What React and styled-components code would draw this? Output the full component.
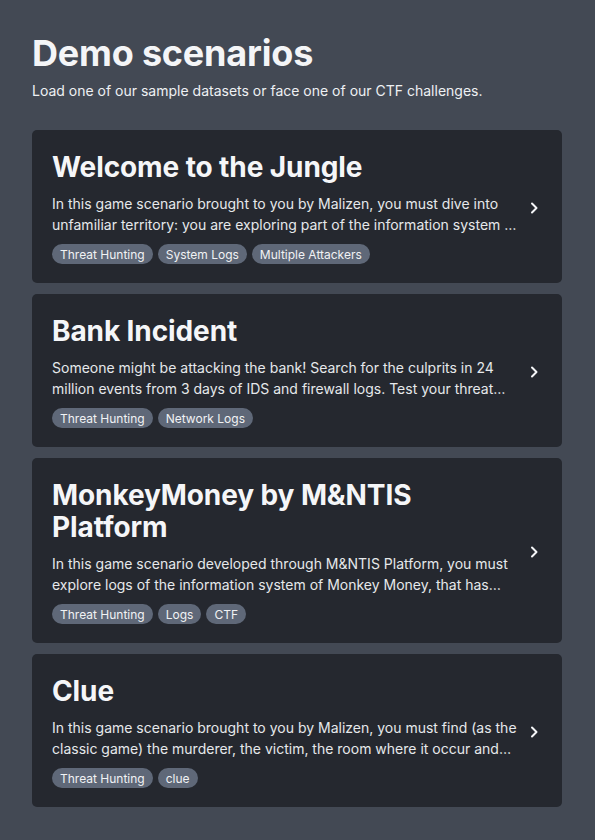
import React from "react";
import styled, { createGlobalStyle } from "styled-components";

const GlobalStyle = createGlobalStyle`
  html, body {
    margin: 0;
    padding: 0;
    background: #434954;
  }
  body {
    font-family: Inter, "Noto Sans", sans-serif;
    -webkit-font-smoothing: antialiased;
  }
`;

const Page = styled.main`
  min-height: 840px;
  box-sizing: border-box;
  padding: 32px 33px 32px 32px;
  background: #434954;
  color: #f3f4f6;
`;

const Header = styled.header`
  margin-bottom: 29px;
`;

const Title = styled.h1`
  margin: 0;
  font-size: 36px;
  line-height: 42px;
  font-weight: 700;
  color: #f4f5f7;
  letter-spacing: -0.2px;
`;

const Subtitle = styled.p`
  margin: 7px 0 0;
  font-size: 14px;
  line-height: 20px;
  color: #eef0f3;
`;

const List = styled.div`
  display: flex;
  flex-direction: column;
  gap: 11px;
`;

const Card = styled.a`
  display: flex;
  align-items: center;
  gap: 8px;
  padding: 21px 20px 19px 20px;
  background: #25282f;
  border-radius: 5px;
  text-decoration: none;
  color: inherit;
  cursor: pointer;
`;

const Content = styled.div`
  flex: 1;
  min-width: 0;
`;

const CardTitle = styled.h2`
  margin: 0;
  font-size: 28px;
  line-height: 32px;
  font-weight: 700;
  color: #f5f6f8;
  letter-spacing: -0.1px;
`;

const Description = styled.p`
  margin: 10px 0 0;
  font-size: 14px;
  line-height: 21px;
  color: #e6e8eb;
  display: -webkit-box;
  -webkit-line-clamp: 2;
  -webkit-box-orient: vertical;
  overflow: hidden;
`;

const Tags = styled.div`
  display: flex;
  flex-wrap: wrap;
  gap: 5px;
  margin-top: 9px;
`;

const Tag = styled.span`
  display: inline-flex;
  align-items: center;
  height: 20px;
  padding: 0 8px;
  border-radius: 10px;
  background: #5f6878;
  color: #f1f2f4;
  font-size: 12px;
  font-weight: 400;
`;

const Chevron = styled.svg`
  flex: none;
  width: 16px;
  height: 16px;
  color: #f5f6f8;
`;

const scenarios = [
  {
    title: "Welcome to the Jungle",
    description:
      "In this game scenario brought to you by Malizen, you must dive into unfamiliar territory: you are exploring part of the information system of a company that has been attacked by several groups at once.",
    tags: ["Threat Hunting", "System Logs", "Multiple Attackers"],
  },
  {
    title: "Bank Incident",
    description:
      "Someone might be attacking the bank! Search for the culprits in 24 million events from 3 days of IDS and firewall logs. Test your threat hunting skills on a realistic dataset.",
    tags: ["Threat Hunting", "Network Logs"],
  },
  {
    title: "MonkeyMoney by M&NTIS Platform",
    description:
      "In this game scenario developed through M&NTIS Platform, you must explore logs of the information system of Monkey Money, that has been compromised by an attacker.",
    tags: ["Threat Hunting", "Logs", "CTF"],
  },
  {
    title: "Clue",
    description:
      "In this game scenario brought to you by Malizen, you must find (as the classic game) the murderer, the victim, the room where it occur and the weapon used.",
    tags: ["Threat Hunting", "clue"],
  },
];

const ChevronIcon = () => (
  <Chevron viewBox="0 0 16 16" fill="none">
    <path
      d="M6 3.5L10.5 8L6 12.5"
      stroke="currentColor"
      strokeWidth="2"
      strokeLinecap="round"
      strokeLinejoin="round"
    />
  </Chevron>
);

const App = () => {
  return (
    <>
      <GlobalStyle />
      <Page>
        <Header>
          <Title>Demo scenarios</Title>
          <Subtitle>
            Load one of our sample datasets or face one of our CTF challenges.
          </Subtitle>
        </Header>
        <List>
          {scenarios.map((s) => (
            <Card key={s.title}>
              <Content>
                <CardTitle>{s.title}</CardTitle>
                <Description>{s.description}</Description>
                <Tags>
                  {s.tags.map((t) => (
                    <Tag key={t}>{t}</Tag>
                  ))}
                </Tags>
              </Content>
              <ChevronIcon />
            </Card>
          ))}
        </List>
      </Page>
    </>
  );
};

export default App;
